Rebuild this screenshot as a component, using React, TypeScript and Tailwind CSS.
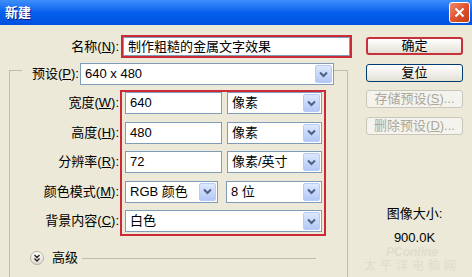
import React from 'react';

const font = "font-['Liberation_Sans','Noto_Sans_CJK_SC',sans-serif]";

const Chevron: React.FC = () => (
    <svg width="9" height="7" viewBox="0 0 9 7">
        <path d="M1 1.5 L4.5 5 L8 1.5" fill="none" stroke="#4d6185" strokeWidth="2" />
    </svg>
);

// text box with XP border
const Field: React.FC<{ w: string; text: string }> = ({ w, text }) => (
    <div className={`${w} h-[22px] bg-white border border-[#7f9db9] flex items-center pl-[4px] text-[13px] text-black`}>
        {text}
    </div>
);

// combo box with blue drop button
const Combo: React.FC<{ w: string; text: string }> = ({ w, text }) => (
    <div className={`${w} h-[22px] bg-white border border-[#7f9db9] flex items-center pl-[4px] pr-[1px] text-[13px] text-black`}>
        <span className="flex-1">{text}</span>
        <div className="w-[17px] h-[18px] rounded-[2px] border border-[#b6cbf5] bg-gradient-to-b from-[#dde8fe] to-[#b3c8f6] flex items-center justify-center">
            <Chevron />
        </div>
    </div>
);

const Label: React.FC<{ text: string; k: string }> = ({ text, k }) => (
    <span>
        {text}(<span className="underline">{k}</span>):
    </span>
);

const Btn: React.FC<{ children: React.ReactNode; className?: string; disabled?: boolean; def?: boolean }> = ({ children, className = '', disabled, def }) => (
    <div
        className={`w-[97px] h-[18px] rounded-[3px] flex items-center justify-center text-[13px] ${className} ${
            disabled
                ? 'border border-[#c9c7ba] bg-[#f4f3ee] text-[#aca899]'
                : def
                ? 'border-2 border-[#c8303c] bg-gradient-to-b from-white to-[#e3e1d6] text-black'
                : 'border border-[#003c74] bg-gradient-to-b from-white to-[#e3e1d6] text-black'
        }`}
    >
        {children}
    </div>
);

const App: React.FC = () => {
    return (
        <div className={`w-[472px] h-[277px] bg-[#ece9d8] overflow-hidden relative ${font}`}>
            {/* Title bar */}
            <div className="h-[25px] bg-gradient-to-b from-[#3d8ffa] via-[#0560ee] to-[#0250de] flex items-center justify-between pl-[5px] pr-[2px]">
                <span className="text-white font-bold text-[13px] [text-shadow:1px_1px_#0a1e8c]">新建</span>
                <div className="w-[21px] h-[21px] rounded-[3px] border border-white bg-gradient-to-br from-[#f08a6c] via-[#e0522c] to-[#c33d18] flex items-center justify-center">
                    <svg width="11" height="11" viewBox="0 0 11 11">
                        <path d="M1.5 1.5 L9.5 9.5 M9.5 1.5 L1.5 9.5" stroke="white" strokeWidth="2" />
                    </svg>
                </div>
            </div>

            <div className="flex">
                {/* Left part */}
                <div className="w-[355px] flex flex-col">
                    <div className="mt-[10px] flex items-center h-[23px] text-[13px] text-black">
                        <div className="w-[119px] text-right"><Label text="名称" k="N" /></div>
                        <div className="ml-[2px] w-[231px] h-[23px] border-2 border-[#cc2a36]">
                            <div className="h-full bg-white border border-[#7f9db9] flex items-center pl-[4px]">
                                制作粗糙的金属文字效果
                            </div>
                        </div>
                    </div>

                    {/* Preset group */}
                    <div className="mt-[12px] ml-[9px] w-[339px] h-[220px] border-l border-t border-r border-[#c0bdaf] flex flex-col text-[13px] text-black">
                        <div className="-mt-[8px] flex items-center">
                            <div className="ml-[12px] w-[58px] pl-[10px] bg-[#ece9d8]"><Label text="预设" k="P" /></div>
                            <Combo w="w-[254px]" text="640 x 480" />
                        </div>

                        <div className="mt-[5px] flex">
                            <div className="w-[110px] pr-[1px] pt-[2px] flex flex-col gap-[7.5px] text-right">
                                <div className="h-[22px] leading-[22px]"><Label text="宽度" k="W" /></div>
                                <div className="h-[22px] leading-[22px]"><Label text="高度" k="H" /></div>
                                <div className="h-[22px] leading-[22px]"><Label text="分辨率" k="R" /></div>
                                <div className="h-[22px] leading-[22px]"><Label text="颜色模式" k="M" /></div>
                                <div className="h-[22px] leading-[22px]"><Label text="背景内容" k="C" /></div>
                            </div>
                            <div className="w-[206px] border-2 border-[#cc2a36] pl-[3px] pb-[2px] flex flex-col gap-[7.5px]">
                                <div className="flex gap-[5px]">
                                    <Field w="w-[97px]" text="640" />
                                    <Combo w="w-[95px]" text="像素" />
                                </div>
                                <div className="flex gap-[5px]">
                                    <Field w="w-[97px]" text="480" />
                                    <Combo w="w-[95px]" text="像素" />
                                </div>
                                <div className="flex gap-[5px]">
                                    <Field w="w-[97px]" text="72" />
                                    <Combo w="w-[95px]" text="像素/英寸" />
                                </div>
                                <div className="flex gap-[8px]">
                                    <Combo w="w-[93px]" text="RGB 颜色" />
                                    <Combo w="w-[96px]" text="8 位" />
                                </div>
                                <Combo w="w-[197px]" text="白色" />
                            </div>
                        </div>

                        {/* Advanced */}
                        <div className="mt-[14px] ml-[20px] mr-[31px] h-[16px] flex items-center">
                            <div className="w-[14px] h-[14px] rounded-full border border-[#b5b2a4] bg-gradient-to-b from-white to-[#dcd9cc] flex items-center justify-center">
                                <svg width="8" height="8" viewBox="0 0 8 8">
                                    <path d="M1.5 1 L4 3.5 L6.5 1 M1.5 4.5 L4 7 L6.5 4.5" fill="none" stroke="#222" strokeWidth="1.3" />
                                </svg>
                            </div>
                            <span className="ml-[8px]">高级</span>
                            <div className="flex-1 ml-[4px] h-px bg-[#c0bdaf]" />
                        </div>
                    </div>
                </div>

                {/* Right buttons */}
                <div className="ml-[11px] flex flex-col items-center">
                    <Btn def className="mt-[12px]">确定</Btn>
                    <Btn className="mt-[9px]">复位</Btn>
                    <Btn disabled className="mt-[8px]">存储预设(<span className="underline">S</span>)...</Btn>
                    <Btn disabled className="mt-[9px]">删除预设(<span className="underline">D</span>)...</Btn>
                    <div className="mt-[72px] text-[13px] text-black leading-[14px]">图像大小:</div>
                    <div className="mt-[10px] text-[13px] text-black leading-[14px]">900.0K</div>
                </div>
            </div>

            {/* watermark, kept below the size text */}
            <div className="absolute left-[364px] top-[246px] flex flex-col items-center text-[#e0dccd] pointer-events-none">
                <span className="text-[12px] font-bold italic leading-[12px]">PConline</span>
                <span className="text-[12px] tracking-[4px] leading-[16px]">太平洋电脑网</span>
            </div>
        </div>
    );
};

export default App;
